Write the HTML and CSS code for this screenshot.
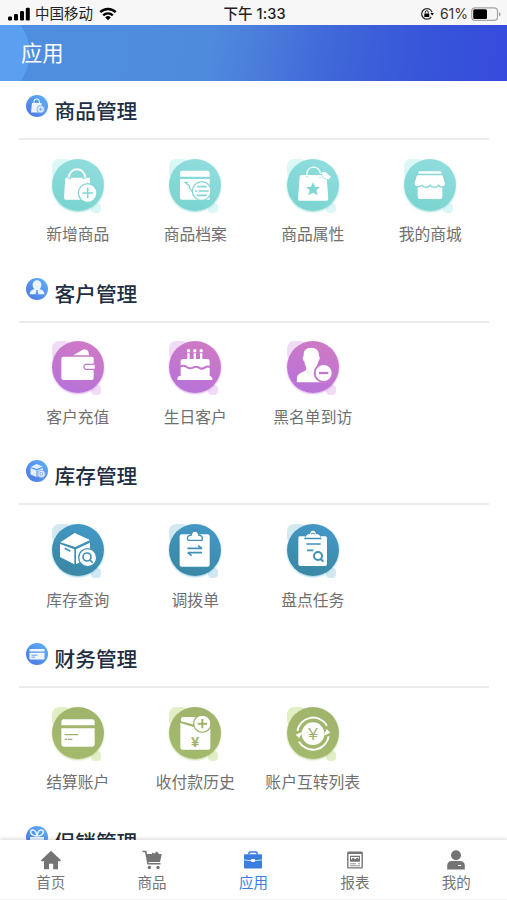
FILE: index.html
```html
<!DOCTYPE html>
<html lang="zh-CN">
<head>
<meta charset="utf-8">
<title>应用</title>
<link rel="stylesheet" href="styles.css">
</head>
<body>
<svg class="defs" width="0" height="0" aria-hidden="true">
  <defs>
    <linearGradient id="blue" x1="0" y1="1" x2="1" y2="0"><stop offset="0" stop-color="#4b74e2"/><stop offset="1" stop-color="#5fb4f8"/></linearGradient>
  </defs>
</svg>
<div class="screen">
  <div class="status">
    <div class="carrier">
      <svg class="signal" viewBox="0 0 22 14"><rect x="0" y="9.5" width="4" height="4" rx="1.2"/><rect x="6" y="7" width="4" height="6.5" rx="1.2"/><rect x="12" y="4" width="4" height="9.5" rx="1.2"/><rect x="17.8" y="0.8" width="4" height="12.7" rx="1.2"/></svg>
      <span>中国移动</span>
      <svg class="wifi" viewBox="0 0 18 14"><path d="M1.3 5.2a11 11 0 0 1 15.4 0" stroke-width="2.5"/><path d="M4.2 8.4a6.8 6.8 0 0 1 9.6 0" stroke-width="2.3"/><path class="dot" d="M9 13.2 6.2 10.4a4 4 0 0 1 5.6 0z"/></svg>
    </div>
    <div class="time">下午 1:33</div>
    <div class="power">
      <svg class="lock" viewBox="0 0 14 14"><path d="M12 5.2A5.3 5.3 0 1 0 11.300 10" fill="none" stroke="#333" stroke-width="1.300"/><path d="M10.400 6h3.600l-1.800 2.600z"/><rect x="4.3" y="6.4" width="5" height="3.6" rx=".5"/><path d="M5.3 6.5V5.2a1.5 1.5 0 0 1 3 0v1.3" fill="none" stroke="#222"/></svg>
      <span>61%</span>
      <svg class="battery" viewBox="0 0 30 14"><rect x=".7" y=".8" width="25.8" height="12.6" rx="3.4" fill="none" stroke="#a5a5a5" stroke-width="1.2"/><rect x="2.2" y="2.3" width="13.8" height="9.6" rx="1.5"/><path d="M28 5v4.3q1.6-.6 1.6-2.1T28 5z" fill="#a5a5a5"/></svg>
    </div>
  </div>
  <header class="header"><h1>应用</h1></header>

  <main class="content">
    <section class="group teal">
      <h2><svg viewBox="0 0 22 22"><circle cx="11" cy="11" r="11" fill="url(#blue)"/><g fill="#fff"><path d="M6 8h9.5l.5 9.5H5z" opacity=".9"/><path d="M8 8.5V6.6a2.7 2.7 0 0 1 5.4 0v1.9" fill="none" stroke="#fff"/><circle cx="14.7" cy="14.2" r="3.8" fill="#dcecff" stroke="#6aa3ef" stroke-width=".7"/><path d="M12.9 14.2h3.6M14.7 12.4V16" stroke="#6aa3ef" stroke-width=".8"/></g></svg><span>商品管理</span></h2>
      <div class="grid">
        <div class="app"><div class="disc"><svg viewBox="0 0 180 180"><path class="w" d="M52 68h70q4 0 4 4v62H54q-6 0-6-6z"/><path class="o" stroke-width="6" d="M62 68C67 34 107 34 112 68"/><path class="c" stroke-width="3" d="M60 69q5 6 10 0M103 69q5 6 10 0"/><circle class="wc" cx="119" cy="114" r="28"/><path class="c" stroke-width="5" d="M103 114h32M119 98v32"/></svg></div><span>新增商品</span></div>
        <div class="app"><div class="disc"><svg viewBox="0 0 180 180"><path class="w" d="M52 47h75q7 0 7 7v11H45V54q0-7 7-7zM45 72h89v62H51q-6 0-6-6z"/><path class="c" stroke-width="4" d="M62 84l11 8q0 12 12 18M58 82h12"/><circle class="wc" cx="110" cy="108" r="28"/><path class="c" stroke-width="5" d="M97 95h28M90 108h7m4 0h30M95 121h30"/></svg></div><span>商品档案</span></div>
        <div class="app"><div class="disc"><svg viewBox="0 0 180 180"><path class="w" d="M55 60h70q5 0 6 6l5 66q0 5-5 5H49q-5 0-4-5l5-67q0-5 5-5z"/><path class="o" stroke-width="4" d="M71 61c0-32 38-32 42-4"/><path class="wc narrow" d="M113 51l15-1 17 15-8 10-16-6z"/><path class="c" stroke-width="2" d="M69 64q3 5 7 0M108 66q3 5 7 0"/><path class="f" d="M90 81l6 14 15 1-11 10 4 15-14-8-14 8 4-15-11-10 15-1z"/></svg></div><span>商品属性</span></div>
        <div class="app"><div class="disc"><svg viewBox="0 0 180 180"><rect class="w" x="55" y="49" width="70" height="7" rx="3"/><path class="w" d="M53 88h74v38q0 6-6 6H59q-6 0-6-6z"/><path class="wc" d="M54 59h72q4 0 5 4l7 24q-3 11-12 9-7 0-10-5-7 7-13 6-8 0-12-6-6 6-13 6-8 0-12-6-8 6-16 4-9-2-8-12l6-20q1-4 6-4z"/></svg></div><span>我的商城</span></div>
      </div>
    </section>

    <section class="group purple">
      <h2><svg viewBox="0 0 22 22"><circle cx="11" cy="11" r="11" fill="url(#blue)"/><path d="M6.6 6.700a4.400 4.400 0 0 1 8.800 0c0 2.300-1 3.600-2 4.400 3 .9 5 2.200 5 5.200H3.600c0-3 2-4.300 5-5.200-1-.8-2-2.100-2-4.400z" fill="#eaf5ff"/><path d="M10 12h2l-.5 1.300 1 2.500-1.500 1-1.500-1 1-2.500z" fill="#5c91ea"/></svg><span>客户管理</span></h2>
      <div class="grid">
        <div class="app"><div class="disc"><svg viewBox="0 0 180 180"><path class="w" d="M46 59h85q6 0 6 6v58q0 6-6 6H46q-6 0-6-6V65q0-6 6-6zM76 55l31-18 8 1q7 1 8 17z"/><path class="wc" d="M140 82h-27a8 8 0 0 0 0 15h27"/></svg></div><span>客户充值</span></div>
        <div class="app"><div class="disc"><svg viewBox="0 0 180 180"><path class="o" stroke-width="7" d="M70.500 49v19M89.500 49v19M108.500 49v19"/><path class="w" d="M66 37h9v9h-9zM85 37h9v9h-9zM104 37h9v9h-9zM55 66h72q7 0 7 7v45H47V73q0-7 8-7zM42 117h94q6 3 7 12H37q0-9 5-12z"/><path class="c" stroke-width="6" d="M45 89q11-6 20 1t19 2q10-6 18 0t17 0q8-6 17-2"/></svg></div><span>生日客户</span></div>
        <div class="app"><div class="disc"><svg viewBox="0 0 180 180"><path class="w" d="M84 32c18 0 25 12 24 26 5 3 1 13-2 15-2 10-6 15-7 20 0 12 27 14 30 34v9H42c-3-25 8-27 22-33 7-3 7-10 4-16-3-4-3-9-4-14-5-3-7-13-2-15-1-14 4-26 22-26z"/><circle class="wc wide" cx="122" cy="108" r="27"/><path class="c" stroke-width="7" d="M108 108h28"/></svg></div><span>黑名单到访</span></div>
      </div>
    </section>

    <section class="group azure">
      <h2><svg viewBox="0 0 22 22"><circle cx="11" cy="11" r="11" fill="url(#blue)"/><g fill="#e3eeff"><path d="M4.500 7l6-3 6.500 2.500-6 2.500zM4.500 8l6 2.200V17l-6-2.500zM11.500 10.200L17 8v6.500L11.500 17z"/><circle cx="15.500" cy="14" r="3.800" stroke="#6693ec" stroke-width=".7"/><circle cx="15.300" cy="13.800" r="1.500" fill="none" stroke="#6693ec" stroke-width=".7"/></g></svg><span>库存管理</span></h2>
      <div class="grid">
        <div class="app"><div class="disc"><svg viewBox="0 0 180 180"><path class="w" d="M37 67l43-28 46 21-44 21zM36 72l43 16v45l-43-22zM84 88l42-20v42l-42 23z"/><path class="c" stroke-width="5" d="M50 85l17 9"/><circle class="wc" cx="119" cy="113" r="27"/><circle class="c" stroke-width="5" cx="117" cy="111" r="12"/><path class="c" stroke-width="5" d="M126 120l8 8"/></svg></div><span>库存查询</span></div>
        <div class="app"><div class="disc"><svg viewBox="0 0 180 180"><rect class="w" x="44" y="43" width="90" height="97" rx="6"/><path class="wc" d="M69 61q-6-14 10-16 1-12 11-12t11 12q15 2 10 16z"/><path class="c" stroke-width="5" d="M67 85h44M99 77l12 8M111 98H68M68 98l12 9"/></svg></div><span>调拨单</span></div>
        <div class="app"><div class="disc"><svg viewBox="0 0 180 180"><path class="w" d="M50 49h17l-4 9h53l-4-9h15q5 0 5 6v77q0 6-6 6H52q-6 0-6-6V55q0-6 4-6z"/><path class="w" d="M67 53q2-10 14-11 2-10 9-10t9 10q12 1 14 11z"/><path class="c" stroke-width="3" d="M84 42q6-6 12 0"/><path class="c" stroke-width="5" d="M70 72h43M72 91h19"/><circle class="c" stroke-width="6" cx="105" cy="108" r="12"/><path class="c" stroke-width="6" d="M113 117l8 8"/></svg></div><span>盘点任务</span></div>
      </div>
    </section>

    <section class="group olive">
      <h2><svg viewBox="0 0 22 22"><circle cx="11" cy="11" r="11" fill="url(#blue)"/><path d="M4.500 6h13q1 0 1 1v1.500h-15V7q0-1 1-1zM3.500 9.700h15v5.800q0 1-1 1h-13q-1 0-1-1z" fill="#eef6ff"/><path d="M5.500 12.200h6M5.500 14.200h3.500" stroke="#6ba3f0"/></svg><span>财务管理</span></h2>
      <div class="grid">
        <div class="app"><div class="disc"><svg viewBox="0 0 180 180"><path class="w" d="M47 49h86q7 0 7 7v11H40V56q0-7 7-7zM40 76h100v48q0 7-7 7H47q-7 0-7-7z"/><path class="c" stroke-width="4" d="M50 95h41M50 109h7m3 0h13"/></svg></div><span>结算账户</span></div>
        <div class="app"><div class="disc"><svg viewBox="0 0 180 180"><path class="w" d="M46 60l42 13h48v61q0 6-6 6H52q-6 0-6-6zM48 55V47q0-5 5-5h39v24z"/><circle class="wc" cx="112" cy="62" r="26"/><path class="c" stroke-width="6" d="M98 62h28M112 48v28"/><text class="yen" x="90" y="133">¥</text></svg></div><span>收付款历史</span></div>
        <div class="app"><div class="disc"><svg viewBox="0 0 180 180"><circle class="w" cx="90" cy="92" r="34"/><path class="o" stroke-width="6" d="M43 84a48 48 0 0 1 89-16M137 100a48 48 0 0 1-89 16"/><path class="w" d="M38 95l20-9-9 20zM142 89l-20 9 9-20z"/><text class="yen big" x="90" y="110">¥</text></svg></div><span>账户互转列表</span></div>
      </div>
    </section>

    <section class="group">
      <h2><svg viewBox="0 0 22 22"><circle cx="11" cy="11" r="11" fill="url(#blue)"/><path d="M4 11h14v6H4z" fill="#e5f3ff"/><path d="M11 10C4 10 3 4 7 4q3 0 4 6 1-6 4-6c4 0 3 6-4 6z" fill="none" stroke="#e5f3ff" stroke-width="1.600"/></svg><span>促销管理</span></h2>
    </section>
  </main>

  <nav class="tabs">
    <div class="tab"><svg viewBox="0 0 20 20"><path d="M10 .8 20 10.300l-.8 1H17v8h-4.800v-5.500H8v5.500H3v-8H.5L0 10.300z"/></svg><span>首页</span></div>
    <div class="tab"><svg viewBox="0 0 20 20"><path d="M.5 1.500h3.200l2.400 12.300h12.400" fill="none" stroke="currentColor" stroke-width="1.600"/><path d="M4.500 4H10V2.600l2.200 1 2.800-2L17 4h2.800L18 12H6z"/><circle cx="7.400" cy="17.500" r="1.700"/><circle cx="16" cy="17.500" r="1.700"/></svg><span>商品</span></div>
    <div class="tab active"><svg viewBox="0 0 20 20"><path d="M6 4.500V3q0-1 1-1h6q1 0 1 1v1.500" fill="none" stroke="currentColor" stroke-width="1.600"/><path d="M2 4.200h16q1 0 1 1v4.200l-7.200.8V9H8.200v1.200L1 9.400V5.200q0-1 1-1zM1 10.200l7.200.8v1.100h3.600V11l7.200-.8v7.300q0 1-1 1H2q-1 0-1-1z"/></svg><span>应用</span></div>
    <div class="tab"><svg viewBox="0 0 20 20"><rect x="2.800" y="2.300" width="14.400" height="15.600" rx=".8" fill="none" stroke="currentColor" stroke-width="1.400"/><path d="M3 3.500h14" stroke="currentColor"/><path fill-rule="evenodd" d="M5 5.800h10v6H5zM6 9.800l2.200-2 2 1.500 2-1.800 1.800 1.500V7H6z"/><path d="M5 13.800h6M5 15.800h10M13 13.800h2" stroke="currentColor" stroke-width=".8"/></svg><span>报表</span></div>
    <div class="tab"><svg viewBox="0 0 20 20"><circle cx="10" cy="5.300" r="5"/><path d="M1.200 19.500v-4Q1.500 11 6 11h8q4.500 0 4.800 4.500v4z"/><path d="M12 15.500h3.200" stroke="#fff"/></svg><span>我的</span></div>
  </nav>
</div>
</body>
</html>
```

FILE: styles.css
```css
* { box-sizing: border-box; }

body {
  margin: 0;
  background: #fff;
  font-family: "Liberation Sans", "Noto Sans CJK SC", sans-serif;
}

.defs { display: block; }

.screen {
  width: 507px;
  height: 900px;
  display: flex;
  flex-direction: column;
  overflow: hidden;
}

.status {
  height: 25px;
  flex: none;
  display: grid;
  grid-template-columns: 1fr auto 1fr;
  align-items: center;
  padding: 2px 6px 0 8px;
  background: #f7f7f7;
  color: #222;
  font: 14.5px/22px Inter, "Noto Sans CJK SC", sans-serif;
}

.carrier, .power { display: flex; align-items: center; }
.carrier { gap: 5px; }
.power { justify-content: flex-end; gap: 3px; font-size: 14px; color: #333; }
.signal { width: 22px; height: 14px; }
.wifi { width: 18px; height: 14px; margin-left: 1px; fill: none; stroke: #000; }
.wifi .dot { fill: #000; stroke: none; }
.time { font-weight: 500; letter-spacing: 0.1px; }
.lock { width: 14px; height: 14px; margin-right: 3px; }
.battery { width: 30px; height: 14px; }

.header {
  height: 56px;
  flex: none;
  display: flex;
  align-items: center;
  padding: 2px 0 0 21px;
  background:
    radial-gradient(ellipse 48px 48px at -18px 28px, #5a9ff0 98%, transparent 100%),
    linear-gradient(100deg, #4f8fe0 0%, #4f8bdd 41%, #4a7bdb 52%, #3f66d9 66%, #3856d9 82%, #364bdd 100%);
}

.header h1 {
  margin: 0;
  color: #fff;
  font-size: 21.3px;
  font-weight: 400;
  line-height: 30px;
}

.content {
  flex: 1;
  min-height: 0;
  overflow: hidden;
  padding: 0 18px 0 19px;
}

.group { height: 182.7px; }

.group h2 {
  height: 59px;
  margin: 0;
  display: flex;
  align-items: flex-start;
  padding: 14px 0 0 6.5px;
  gap: 7px;
  border-bottom: 2px solid #ebebeb;
  color: #202d42;
  font-size: 20.7px;
  font-weight: 500;
  line-height: 30px;
}

.group h2 svg { width: 22px; height: 22px; flex: none; }
.group h2 span { padding-top: 2px; }

.grid {
  display: grid;
  grid-template-columns: repeat(4, 1fr);
  padding-top: 18.7px;
}

.app {
  isolation: isolate;
  display: flex;
  flex-direction: column;
  align-items: center;
  gap: 12.5px;
  color: #707070;
  font-size: 15.8px;
  line-height: 24px;
  white-space: nowrap;
}

.disc {
  position: relative;
  width: 52px;
  height: 52px;
  border-radius: 50%;
  background: linear-gradient(200deg, var(--top), var(--bottom));
  box-shadow: 0 1px 2px var(--glow);
}

/* pale shapes peeking out from behind the disc */
.disc::before, .disc::after {
  content: "";
  position: absolute;
  z-index: -1;
  background: var(--blob);
}

.disc::before { left: 0; top: 0; width: 20px; height: 20px; border-radius: 7px; }
.disc::after { right: 3px; bottom: -2px; width: 10px; height: 10px; border-radius: 4px; }

.disc svg {
  display: block;
  width: 60px;
  height: 60px;
  margin: -4px;
  transform: translate(-4px, -4px);
}

.disc svg { margin: 0; }

.teal { --top: #93dedf; --bottom: #77d3cd; --tone: #82d6d3; --blob: #dbf7f6; --glow: #a5e0dc; }
.purple { --top: #d27ac3; --bottom: #b471da; --tone: #c577cf; --blob: #f0dcf6; --glow: #dcabeb; }
.azure { --top: #459aca; --bottom: #38859f; --tone: #4291b8; --blob: #d3e9f2; --glow: #91d0ea; }
.olive { --top: #a0b36c; --bottom: #a3ba6c; --tone: #9fb26c; --blob: #e2efc5; --glow: #c8d8a0; }

.w { fill: #fff; }
.o { fill: none; stroke: #fff; }
.c { fill: none; stroke: var(--tone); }
.f { fill: var(--tone); }
.wc { fill: #fff; stroke: var(--tone); stroke-width: 4px; }
.wc.narrow { stroke-width: 2px; }
.wc.wide { stroke-width: 6px; }

.yen {
  fill: var(--tone);
  font: 700 44px "Liberation Sans", sans-serif;
  text-anchor: middle;
}
.yen.big { font-size: 52px; font-weight: 400; }

.tabs {
  position: relative;
  height: 60.5px;
  flex: none;
  display: grid;
  grid-template-columns: repeat(5, 1fr);
  padding-top: 10px;
  background: #fff;
  border-bottom: 1px solid #f0f0f0;
  box-shadow: 0 -1px 4px rgba(0, 0, 0, 0.16);
}

.tab {
  display: flex;
  flex-direction: column;
  align-items: center;
  gap: 2px;
  color: #747474;
  font-size: 14.5px;
  line-height: 22px;
}

.tab svg { width: 20px; height: 20px; fill: currentColor; }
.tab.active { color: #3c7ee0; }
```
